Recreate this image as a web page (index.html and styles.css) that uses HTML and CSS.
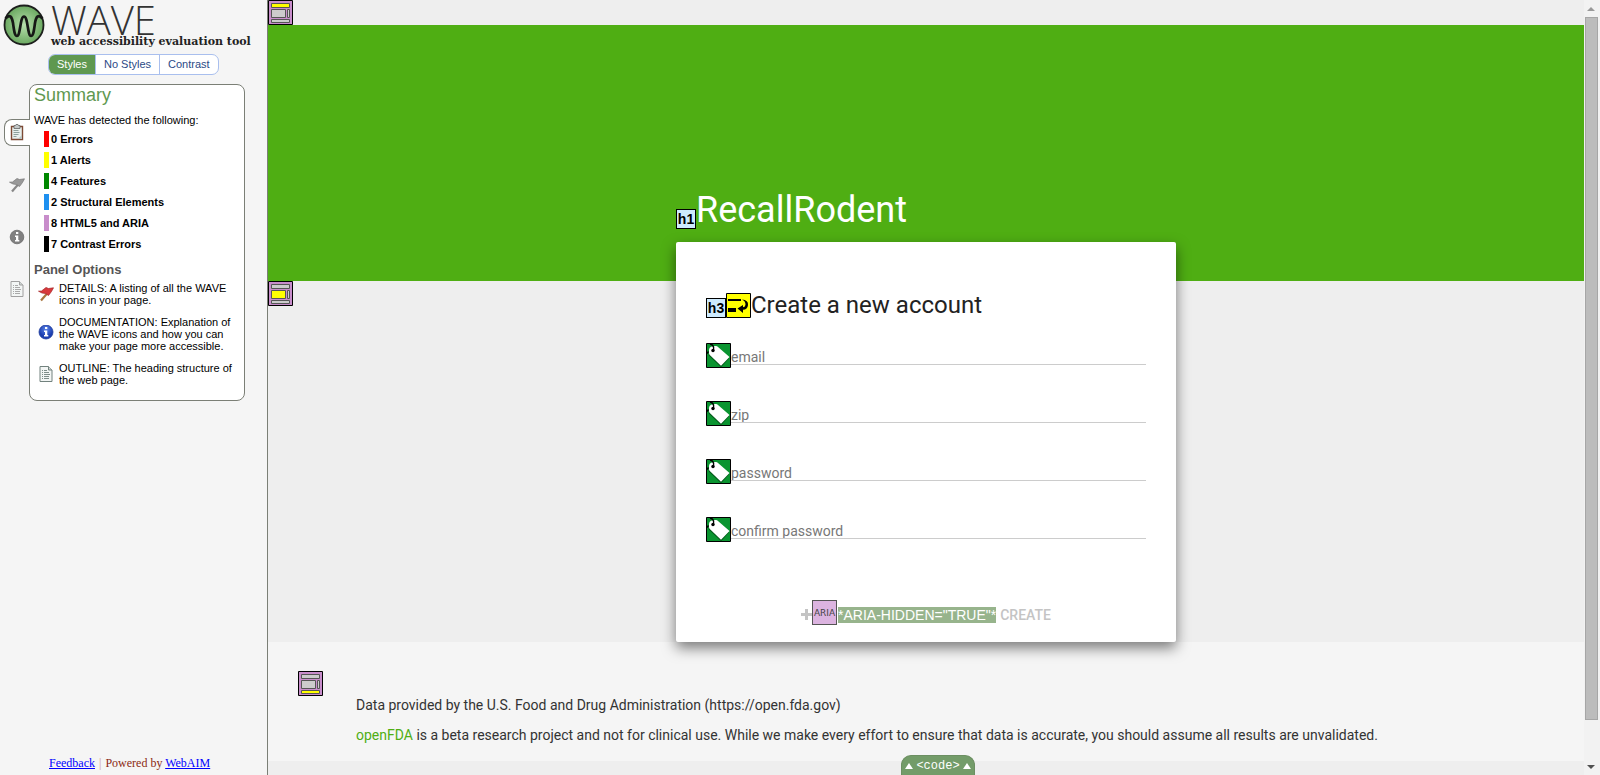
FILE: index.html
```html
<!DOCTYPE html>
<html lang="en">
<head>
<meta charset="utf-8">
<title>WAVE Report</title>
<link rel="stylesheet" href="styles.css">
</head>
<body>
<svg class="defs" aria-hidden="true">
  <defs>
    <radialGradient id="orb"><stop offset="0" stop-color="#b5deab"/><stop offset="1" stop-color="#6aa860"/></radialGradient>
    <radialGradient id="blue" cy="30%"><stop offset="0" stop-color="#5d86ea"/><stop offset="1" stop-color="#1c3fb0"/></radialGradient>
    <symbol id="doc" viewBox="0 0 16 18">
      <path d="M2 1.5h8.5l3.5 3.500v11.500h-12z" fill="#f3f6f5" stroke="currentColor"/>
      <path d="M10.500 1.500v3.500h3.500" fill="#cfd6d4" stroke="currentColor"/>
      <path d="M4 5.500h1m1 0h3M4 7.500h1m1 0h5M4 9.500h1m1 0h6M4 11.500h1m1 0h5M4 13.500h1m1 0h5" stroke="currentColor" stroke-width=".9"/>
    </symbol>
    <symbol id="flag" viewBox="0 0 16 18">
      <path d="M9.500 8L3 15.500" stroke="var(--pole)" stroke-width="2.200"/>
      <path d="M.5 6.200L3.500 6 8 2.500 10.500 3.500 15.500 2.800 13.500 6.500 10.500 10.500 7.500 8.500 4 8z" fill="currentColor" stroke="var(--edge)" stroke-width=".7"/>
    </symbol>
    <symbol id="label" viewBox="0 0 25 25">
      <path d="M.5.5h24v24H.5z" fill="#0a9430" stroke="#000"/>
      <path d="M3.500 6.500Q3 4.500 5 3.800L9.500 3Q11 2.800 12 4L23.500 14.500 15.500 23.500 3.800 12.500Q2.800 11.500 3 10z" fill="#055a1b" transform="translate(-.4 .8)"/>
      <path d="M3 7Q3 4.500 5 3.800L9.500 3Q11 2.800 12 4L23.500 14 15 22.800 3.800 12Q2.800 11 3 9.500z" fill="#fff"/>
      <circle cx="7" cy="7.500" r="1.700"/>
      <path d="M4 1Q8.500 2 7.500 7M1 10.500L2.500 8.500" fill="none" stroke="#000" stroke-width="1.300"/>
    </symbol>
  </defs>
</svg>
<div class="app">
  <aside class="sidebar">
    <header class="brand">
      <svg class="brand-mark" viewBox="0 0 42 42" aria-hidden="true">
        <circle cx="21" cy="21" r="19.500" fill="url(#orb)" stroke="#1d1f1d" stroke-width="1.800"/>
        <path d="M2.500 14.500C7 9.500 9 13 10 19C11 26 11.500 32 14 32C17.500 32 17 12.500 21 12.500C25 12.500 24.500 32 28 32C30.500 32 31 26 32 19C33 13 35 9.500 39.500 14.500" fill="none" stroke="#161816" stroke-width="2.700"/>
      </svg>
      <div class="brand-text">
        <span class="brand-name">WAVE</span>
        <span class="brand-tag">web accessibility evaluation tool</span>
      </div>
    </header>
    <div class="modes">
      <button class="mode mode-on" type="button">Styles</button>
      <button class="mode" type="button">No Styles</button>
      <button class="mode" type="button">Contrast</button>
    </div>
    <div class="panel-row">
      <nav class="rail" aria-label="Panels">
        <button class="rail-tab rail-on" type="button" aria-label="Summary">
          <svg class="icon" viewBox="0 0 16 18"><path d="M2.500 2.500h11v13h-11z" fill="#e9f0ee" stroke="#7d4a35" stroke-width="1.400"/><path d="M5 1.500h1.500L7 .5h2l.5 1H11v3H5z" fill="#c3c8c8" stroke="#666" stroke-width=".8"/><path d="M4.500 6.500h5M4.500 8.500h6M4.500 10.500h5M4.500 12.500h3" stroke="#8ea29d"/><path d="M9 15l4-4v4z" fill="#b9c4c2"/></svg>
        </button>
        <button class="rail-tab" type="button" aria-label="Details"><svg class="icon flag-gray"><use href="#flag"/></svg></button>
        <button class="rail-tab" type="button" aria-label="Documentation">
          <svg class="icon" viewBox="0 0 16 18"><circle cx="8" cy="9" r="6.800" fill="#808080" stroke="#6b6b6b" stroke-width=".8"/><path d="M7 4h2.300v2H7zM6 7.500h3.300V12h1v1.500H6V12h1V9H6z" fill="#fff"/></svg>
        </button>
        <button class="rail-tab" type="button" aria-label="Outline"><svg class="icon gray"><use href="#doc"/></svg></button>
      </nav>
      <section class="panel">
        <h2 class="panel-title">Summary</h2>
        <p class="intro">WAVE has detected the following:</p>
        <ul class="counts">
          <li class="count red">0 Errors</li>
          <li class="count yellow">1 Alerts</li>
          <li class="count green">4 Features</li>
          <li class="count blue">2 Structural Elements</li>
          <li class="count purple">8 HTML5 and ARIA</li>
          <li class="count black">7 Contrast Errors</li>
        </ul>
        <h3 class="options-title">Panel Options</h3>
        <ul class="options">
          <li class="option">
            <svg class="icon flag-red"><use href="#flag"/></svg>
            <span>DETAILS: A listing of all the WAVE icons in your page.</span>
          </li>
          <li class="option">
            <svg class="icon" viewBox="0 0 16 18"><circle cx="8" cy="7" r="7" fill="url(#blue)" stroke="#1f3c9c" stroke-width=".8"/><path d="M7 2h2.300v2H7zM6 5.500h3.300V10h1v1.500H6V10h1V7H6z" fill="#fff"/></svg>
            <span>DOCUMENTATION: Explanation of the WAVE icons and how you can make your page more accessible.</span>
          </li>
          <li class="option">
            <svg class="icon slate"><use href="#doc"/></svg>
            <span>OUTLINE: The heading structure of the web page.</span>
          </li>
        </ul>
      </section>
    </div>
    <footer class="credits"><a href="#feedback">Feedback</a> <span class="bar">|</span> Powered by <a href="#webaim">WebAIM</a></footer>
  </aside>

  <div class="page">
    <div class="strip">
      <svg class="badge" viewBox="0 0 25 25"><path d="M.5.5h24v24H.5z" fill="#c88dcb" stroke="#000"/><path d="M3.500 3.500h18v4h-18z" fill="#ff0" stroke="#555"/><path d="M3.500 9.500h14v8h-14zM19.500 9.500h2v8h-2zM3.500 19.500h18v3h-18z" fill="#ccc" stroke="#555"/></svg>
    </div>
    <header class="hero">
      <div class="hero-row">
        <span class="tag">h1</span>
        <h1 class="hero-title">RecallRodent</h1>
      </div>
    </header>
    <main class="main">
      <svg class="badge main-badge" viewBox="0 0 25 25"><path d="M.5.5h24v24H.5z" fill="#c88dcb" stroke="#000"/><path d="M3.500 3.500h18v4h-18zM19.500 9.500h2v8h-2zM3.500 19.500h18v3h-18z" fill="#ccc" stroke="#555"/><path d="M3.500 9.500h14v8h-14z" fill="#ff0" stroke="#555"/></svg>
      <form class="card">
        <div class="card-head">
          <span class="tag">h3</span>
          <svg class="badge" viewBox="0 0 25 25"><path d="M.5.5h24v24H.5z" fill="#ff0" stroke="#000"/><path d="M2 6h13v2H2zM2 15h8v4H2z"/><path d="M16 6.500Q22.500 7 22 12Q21.500 16.500 17 16.800V20L11.500 15.500 17 12V14.300Q19.500 14 19.500 11.500Q19.500 8 16 6.500z"/></svg>
          <h3 class="card-title">Create a new account</h3>
        </div>
        <div class="fields">
          <div class="field"><svg class="badge"><use href="#label"/></svg><input class="input" type="text" placeholder="email" aria-label="email"></div>
          <div class="field"><svg class="badge"><use href="#label"/></svg><input class="input" type="text" placeholder="zip" aria-label="zip"></div>
          <div class="field"><svg class="badge"><use href="#label"/></svg><input class="input" type="password" placeholder="password" aria-label="password"></div>
          <div class="field"><svg class="badge"><use href="#label"/></svg><input class="input" type="password" placeholder="confirm password" aria-label="confirm password"></div>
        </div>
        <button class="create" type="button">
          <svg class="plus" viewBox="0 0 11 11"><path d="M4 0h3v4h4v3H7v4H4V7H0V4h4z" fill="#c4c4c4"/></svg>
          <span class="aria-tag">ARIA</span>
          <span class="aria-text">*ARIA-HIDDEN="TRUE"*</span>
          <span class="create-text">CREATE</span>
        </button>
      </form>
    </main>
    <footer class="footer">
      <svg class="badge" viewBox="0 0 25 25"><path d="M.5.5h24v24H.5z" fill="#c88dcb" stroke="#000"/><path d="M3.500 3.500h18v4h-18zM3.500 9.500h14v8h-14zM19.500 9.500h2v8h-2z" fill="#ccc" stroke="#555"/><path d="M3.500 19.500h18v3h-18z" fill="#ff0" stroke="#555"/></svg>
      <div class="legal">
        <p>Data provided by the U.S. Food and Drug Administration (https://open.fda.gov)</p>
        <p><a class="fda" href="#openfda">openFDA</a> is a beta research project and not for clinical use. While we make every effort to ensure that data is accurate, you should assume all results are unvalidated.</p>
      </div>
    </footer>
  </div>

  <div class="scroll" aria-hidden="true">
    <svg class="arrow" viewBox="0 0 16 16"><path d="M7 7l4 4H3z" fill="#999"/></svg>
    <div class="thumb"></div>
    <svg class="arrow" viewBox="0 0 16 16"><path d="M7 10L3 6h8z" fill="#505050"/></svg>
  </div>
  <button class="code-tab" type="button"><span class="tri"></span>&lt;code&gt;<span class="tri"></span></button>
</div>
</body>
</html>
```

FILE: styles.css
```css
* { box-sizing: border-box; }
body { margin: 0; background: #eee; font-family: Roboto, "Liberation Sans", sans-serif; }
h1, h2, h3, p, ul { margin: 0; padding: 0; font-weight: 400; }
ul { list-style: none; }
button { border: 0; padding: 0; background: none; font: inherit; color: inherit; }
svg { display: block; flex: none; }
.defs { position: absolute; width: 0; height: 0; }

.app { display: grid; grid-template-columns: 268px 1fr 16px; min-height: 100vh; position: relative; }

/* Sidebar */
.sidebar { display: flex; flex-direction: column; background: #f5f5f5; border-right: 1px solid #7b7f76; font: 11px/12px "Liberation Sans", Arial, sans-serif; color: #000; }
.brand { display: flex; gap: 6px; height: 50px; padding: 4px 0 0 3px; }
.brand-mark { width: 42px; height: 42px; }
.brand-text { display: flex; flex-direction: column; white-space: nowrap; }
.brand-name { font: 300 40px/32px "Open Sans", sans-serif; color: #333; }
.brand-tag { font: 700 11px/12px "DejaVu Serif", serif; color: #222; }
.modes { display: flex; align-self: flex-start; margin: 4px 0 9px 48px; border: 1px solid #a9bfee; border-radius: 7px; overflow: hidden; background: #fff; }
.mode { padding: 0 8px; line-height: 19px; color: #2c4a86; border-left: 1px solid #a9bfee; }
.mode-on { background: #5f9850; color: #fff; border-left: 0; }
.panel-row { display: flex; padding: 0 22px 0 4px; }
.rail { display: flex; flex-direction: column; gap: 25px; padding-top: 35px; margin-right: -1px; z-index: 1; }
.rail-tab { display: flex; align-items: center; width: 26px; height: 27px; padding-left: 4px; border: 1px solid transparent; }
.rail-on { background: #fff; border-color: #7b7f76; border-right: 0; border-radius: 8px 0 0 8px; }
.icon { width: 16px; height: 18px; }
.gray { color: #a0a0a0; }
.slate { color: #72827e; }
.flag-gray { color: #999; --pole: #888; --edge: #777; }
.flag-red { color: #d8393c; --pole: #a9763f; --edge: #a52528; }
.panel { flex: 1; background: #fff; border: 1px solid #7b7f76; border-radius: 8px; padding: 0 4px 14px; }
.panel-title { font-size: 18px; line-height: 20px; color: #5f9850; }
.intro { margin-top: 9px; }
.counts { padding: 5px 0 0 10px; }
.count { margin-bottom: 5px; padding-left: 2px; border-left: 5px solid var(--c); font-weight: 700; line-height: 16px; }
.red { --c: #f00; }
.yellow { --c: #ff0; }
.green { --c: #080; }
.blue { --c: #1e90f0; }
.purple { --c: #c88dcb; }
.black { --c: #000; }
.options-title { margin-top: 10px; font-size: 13px; line-height: 16px; font-weight: 700; color: #555; }
.options { display: flex; flex-direction: column; gap: 10px; padding: 4px 0 0 4px; }
.option { display: flex; align-items: center; gap: 5px; }
.credits { margin: auto 0 5px 49px; font: 12px/14px "Liberation Serif", serif; color: #8b2a12; }
.credits a { color: #00f; }
.bar { margin: 0 1px; color: #c99; }

/* Evaluated page */
.page { display: flex; flex-direction: column; min-width: 0; background: #eee; }
.badge { width: 25px; height: 25px; }
.hero { display: flex; flex-direction: column; justify-content: flex-end; align-items: center; min-height: 256px; padding-bottom: 47px; background: #4fae13; }
.hero-row { display: flex; align-items: flex-end; width: 500px; max-width: 100%; }
.tag { display: block; width: 20px; height: 20px; border: 1px solid #000; background: #cdeafd; font: 700 14px/19px "Liberation Sans", Arial, sans-serif; text-align: center; color: #000; }
.hero-row .tag { margin-bottom: 5px; }
.hero-title { font-size: 36px; line-height: 48px; color: #fff; }
.main { position: relative; display: flex; flex-direction: column; align-items: center; }
.main-badge { position: absolute; left: 0; top: 0; }
.card { position: relative; width: 500px; max-width: 100%; margin-top: -39px; padding: 51px 30px 17px; background: #fff; border-radius: 2px; box-shadow: 0 6px 14px rgba(0, 0, 0, .5); }
.card-head { display: flex; align-items: flex-end; }
.card-title { font-size: 24px; line-height: 25px; color: #222; }
.fields { display: flex; flex-direction: column; gap: 33px; margin-top: 25px; }
.field { display: flex; align-items: flex-start; }
.input { flex: 1; min-width: 0; height: 22px; padding: 6px 0 0; border: 0; border-bottom: 1px solid #ccc; border-radius: 0; background: none; font: 14px/16px Roboto, sans-serif; color: #222; }
.input::placeholder { color: #777; opacity: 1; }
.create { display: flex; align-items: center; margin: 58px auto 0; font-size: 14px; line-height: 16px; color: #c4c4c4; white-space: nowrap; }
.plus { width: 11px; height: 11px; margin-top: 4px; }
.aria-tag { width: 25px; height: 25px; margin-right: 1px; border: 1px solid #555; background: #dcb4e0; font: 9px/24px "DejaVu Sans", sans-serif; text-align: center; color: #444; }
.aria-text { margin-top: 4px; background: #97b48c; color: #fff; font-family: "Liberation Sans", Arial, sans-serif; }
.create-text { margin: 4px 0 0 4px; font-weight: 500; }
.footer { display: flex; align-items: flex-start; gap: 33px; padding: 29px 30px 11px; background: #f5f5f5; }
.legal { padding-top: 19px; font-size: 14px; line-height: 30px; color: #333; }
.fda { color: #4fae13; text-decoration: none; }

/* Scroll bar and code drawer */
.scroll { display: flex; flex-direction: column; background: #f2f2f2; }
.arrow { width: 16px; height: 16px; }
.thumb { flex: 1; margin: 1px 2px 39px 1px; background: #bcbcbc; border: 1px solid #a6a6a6; }
.code-tab { position: absolute; left: 901px; bottom: 0; display: flex; justify-content: center; align-items: center; gap: 3px; width: 74px; height: 20px; border: 1px solid #6c8f62; border-bottom: 0; border-radius: 10px 10px 0 0; background: #739c69; color: #fff; font: 12px/18px "Liberation Mono", monospace; }
.tri { border: 4px solid transparent; border-top: 0; border-bottom: 6px solid #fff; }
```
